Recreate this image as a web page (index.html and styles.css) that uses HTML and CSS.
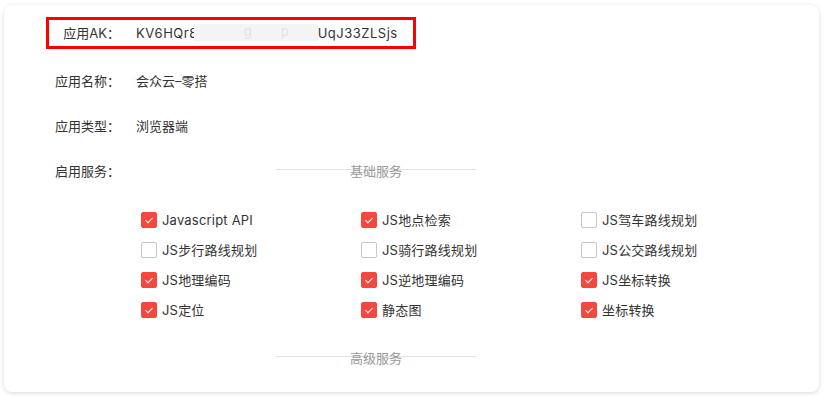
FILE: index.html
```html
<!DOCTYPE html>
<html lang="zh-CN">
<head>
    <meta charset="utf-8"/>
    <title>应用详情</title>
    <link rel="stylesheet" href="styles.css">
</head>
<body>
<div class="card">
    <div class="info-row info-row-ak">
        <span class="info-label">应用AK：</span>
        <span class="info-value ak-value">KV6HQr8<span class="masked"><span class="masked-g">g</span><span class="masked-p">p</span></span>UqJ33ZLSjs</span>
        <div class="mark"></div>
    </div>
    <div class="info-row">
        <span class="info-label">应用名称：</span>
        <span class="info-value">会众云–零搭</span>
    </div>
    <div class="info-row">
        <span class="info-label">应用类型：</span>
        <span class="info-value">浏览器端</span>
    </div>
    <div class="info-row info-row-services">
        <span class="info-label">启用服务：</span>
        <div class="services">
            <div class="divider"><span>基础服务</span></div>
            <ul class="service-grid">
                <li><span class="check on"></span>Javascript API</li>
                <li><span class="check on"></span>JS地点检索</li>
                <li><span class="check"></span>JS驾车路线规划</li>
                <li><span class="check"></span>JS步行路线规划</li>
                <li><span class="check"></span>JS骑行路线规划</li>
                <li><span class="check"></span>JS公交路线规划</li>
                <li><span class="check on"></span>JS地理编码</li>
                <li><span class="check on"></span>JS逆地理编码</li>
                <li><span class="check on"></span>JS坐标转换</li>
                <li><span class="check on"></span>JS定位</li>
                <li><span class="check on"></span>静态图</li>
                <li><span class="check on"></span>坐标转换</li>
            </ul>
            <div class="divider divider-bottom"><span>高级服务</span></div>
        </div>
    </div>
</div>
</body>
</html>
```

FILE: styles.css
```css
html, body {
    margin: 0;
    background: #fff;
}

body {
    padding: 5px 6px 5px 4px;
    font-family: Inter, "Noto Sans CJK SC", sans-serif;
    font-size: 13px;
    color: #333;
}

.card {
    height: 387px;
    box-sizing: border-box;
    padding: 18px 20px 0 36px;
    background: #fff;
    border-radius: 8px;
    box-shadow: 0 1px 4px rgba(0, 0, 0, 0.16);
}

.info-row {
    display: flex;
    line-height: 20px;
    margin-bottom: 25px;
}

.info-row-ak {
    position: relative;
    margin-bottom: 28px;
}

.info-label {
    width: 80px;
    flex: none;
    text-align: right;
}

.info-value {
    margin-left: 16px;
    white-space: nowrap;
}

.ak-value {
    letter-spacing: 0.5px;
}

.masked {
    display: inline-block;
    position: relative;
    width: 124px;
    height: 17px;
    margin-left: -4px;
    vertical-align: -3px;
    background: #f4f4f4;
    color: #e2e2e2;
}

.masked-g {
    position: absolute;
    left: 50px;
    top: -3px;
}

.masked-p {
    position: absolute;
    left: 87px;
    top: -3px;
}

.mark {
    position: absolute;
    left: 6px;
    top: -6px;
    width: 370px;
    height: 32px;
    box-sizing: border-box;
    border: 3px solid #f00;
}

.services {
    margin-left: 16px;
}

.divider {
    position: relative;
    width: 200px;
    height: 20px;
    margin-left: 140px;
    text-align: center;
    color: #999;
}

.divider::before {
    content: "";
    position: absolute;
    left: 0;
    right: 0;
    top: 8px;
    border-top: 1px solid #e3e3e3;
}

.divider span {
    position: relative;
}

.divider-bottom {
    margin-top: 28px;
}

.service-grid {
    display: grid;
    grid-template-columns: repeat(3, 220px);
    row-gap: 10px;
    margin: 29px 0 0 5px;
    padding: 0;
    list-style: none;
    letter-spacing: 0.2px;
}

.service-grid li {
    display: flex;
    align-items: center;
    height: 20px;
    white-space: nowrap;
}

.check {
    position: relative;
    width: 16px;
    height: 16px;
    margin-right: 5px;
    box-sizing: border-box;
    border: 1px solid #c8c8c8;
    border-radius: 2px;
    background: #fff;
}

.check.on {
    border-color: #f5473e;
    background: #f5473e;
}

.check.on::after {
    content: "";
    position: absolute;
    left: 5px;
    top: 3px;
    width: 3px;
    height: 6px;
    border: solid #fff;
    border-width: 0 1px 1px 0;
    transform: rotate(45deg);
}
```
